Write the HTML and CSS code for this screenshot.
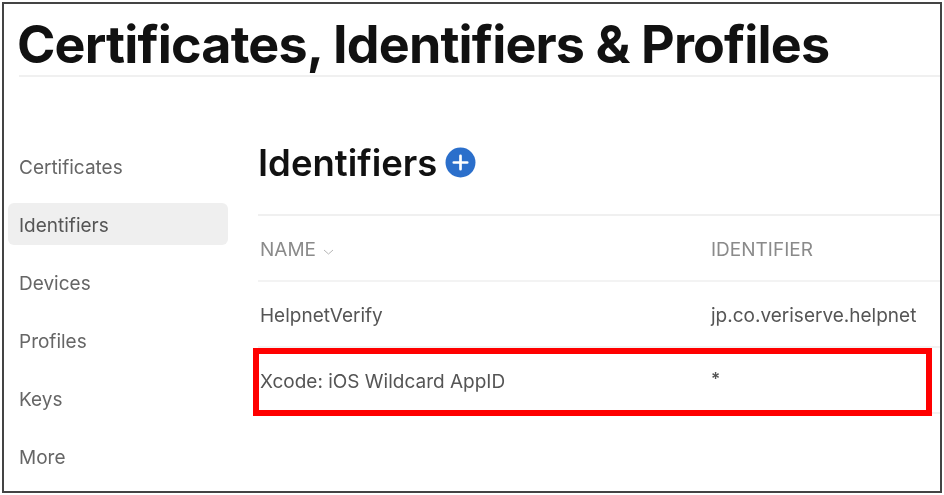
FILE: index.html
```html
<!DOCTYPE html>
<html lang="en">
<head>
  <meta charset="UTF-8">
  <meta name="viewport" content="width=device-width, initial-scale=1.0">
  <title>Certificates, Identifiers &amp; Profiles</title>
  <link rel="stylesheet" href="styles.css">
</head>
<body>
  <div class="frame">
    <h1 class="page-title">Certificates, Identifiers &amp; Profiles</h1>
    <div class="layout">
      <nav class="sidebar">
        <a class="nav-item">Certificates</a>
        <a class="nav-item active">Identifiers</a>
        <a class="nav-item">Devices</a>
        <a class="nav-item">Profiles</a>
        <a class="nav-item">Keys</a>
        <a class="nav-item">More</a>
      </nav>
      <main class="content">
        <div class="heading">
          <h2>Identifiers</h2>
          <svg class="add-icon" width="31" height="31" viewBox="0 0 30 30">
            <circle cx="15" cy="15" r="14.5" fill="#2b6fcb"/>
            <path d="M15 8.5v13M8.5 15h13" stroke="#fff" stroke-width="2.6" stroke-linecap="round"/>
          </svg>
        </div>
        <div class="table">
          <div class="row head">
            <div class="col-name">NAME
              <svg class="sort" width="11" height="6" viewBox="0 0 11 6">
                <path d="M1 1l4.5 4 4.5-4" fill="none" stroke="#b5b5b5" stroke-width="1"/>
              </svg>
            </div>
            <div class="col-id">IDENTIFIER</div>
          </div>
          <div class="row">
            <div class="col-name">HelpnetVerify</div>
            <div class="col-id">jp.co.veriserve.helpnet</div>
          </div>
          <div class="row">
            <div class="col-name">Xcode: iOS Wildcard AppID</div>
            <div class="col-id star">*</div>
          </div>
        </div>
      </main>
    </div>
    <div class="highlight"></div>
  </div>
</body>
</html>
```

FILE: styles.css
```css
* {
  box-sizing: border-box;
}
html, body {
  height: 100%;
}
body {
  margin: 0;
  padding: 2px;
  background: #fff;
  font-family: Inter, "Liberation Sans", sans-serif;
  overflow: hidden;
}
.frame {
  position: relative;
  width: 940px;
  height: 491px;
  border: 2px solid #444;
  padding: 0 0 0 4px;
  overflow: hidden;
}
/* the reference is a slightly soft screenshot, the red box is not */
.page-title,
.layout {
  filter: blur(0.5px);
}
.page-title {
  margin: 0 0 0 11px;
  height: 73px;
  padding-top: 11px;
  font-size: 52px;
  line-height: 60px;
  font-weight: 700;
  letter-spacing: -0.85px;
  text-indent: -2px;
  color: #111;
  border-bottom: 2px solid #f0f0f0;
  white-space: nowrap;
}
.layout {
  display: flex;
  margin-top: 68px;
}
.sidebar {
  width: 220px;
  flex: none;
  display: flex;
  flex-direction: column;
  gap: 16px;
}
.nav-item {
  height: 42px;
  padding-left: 11px;
  line-height: 46px;
  font-size: 19px;
  color: #666;
  border-radius: 6px;
}
.nav-item.active {
  background: #efefef;
  color: #555;
}
.content {
  flex: 1;
  min-width: 0;
  padding-left: 30px;
  margin-top: -7px;
}
.heading {
  display: flex;
  align-items: center;
  gap: 8px;
  height: 48px;
}
.heading h2 {
  margin: 0;
  padding-top: 1px;
  font-size: 36.5px;
  line-height: 48px;
  font-weight: 600;
  color: #111;
}
.table {
  margin-top: 28px;
  border-top: 2px solid #f0f0f0;
}
.row {
  display: flex;
  height: 66px;
  align-items: center;
  padding-left: 2px;
  padding-top: 2px;
  font-size: 19px;
  color: #555;
  border-bottom: 2px solid #f3f3f3;
}
.row.head {
  color: #8a8a8a;
}
.col-name {
  width: 451px;
  flex: none;
}
.sort {
  margin-left: 2px;
  vertical-align: 1px;
}
.star {
  padding-bottom: 4px;
  font-size: 17px;
  font-weight: 600;
}
.highlight {
  position: absolute;
  left: 249px;
  top: 344px;
  width: 679px;
  height: 68px;
  border: 6px solid #f00;
}
```
